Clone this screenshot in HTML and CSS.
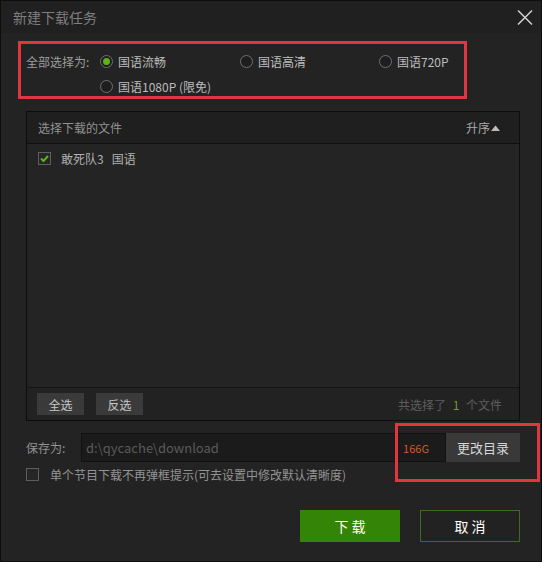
FILE: index.html
```html
<!DOCTYPE html>
<html lang="zh">
<head>
<meta charset="utf-8">
<title>新建下载任务</title>
<link rel="stylesheet" href="styles.css">
</head>
<body>
<div class="window">
  <div class="titlebar">
    <span class="title">新建下载任务</span>
    <svg class="close" width="16" height="15" viewBox="0 0 16 15"><path d="M1 0.5 L15 14.5 M15 0.5 L1 14.5" stroke="#cfcfcf" stroke-width="1.5" fill="none"/></svg>
  </div>

  <div class="quality">
    <span class="q-label">全部选择为:</span>
    <label class="opt"><span class="radio on"></span>国语流畅</label>
    <label class="opt"><span class="radio"></span>国语高清</label>
    <label class="opt"><span class="radio"></span>国语720P</label>
    <span class="q-blank"></span>
    <label class="opt"><span class="radio"></span>国语1080P (限免)</label>
  </div>

  <div class="panel">
    <div class="panel-head">
      <span>选择下载的文件</span>
      <span class="sort">升序<svg width="9" height="6" viewBox="0 0 9 6"><path d="M0 6 L4.5 0.5 L9 6 Z" fill="#bbb"/></svg></span>
    </div>
    <div class="panel-list">
      <div class="file-row">
        <span class="check on"><svg width="11" height="11" viewBox="0 0 11 11"><path d="M2 5.5 L4.5 8 L9 3" stroke="#5fb41c" stroke-width="2" fill="none"/></svg></span>
        <span>敢死队3<span class="gap"></span>国语</span>
      </div>
    </div>
    <div class="panel-foot">
      <div class="foot-btns">
        <button class="btn-small">全选</button>
        <button class="btn-small">反选</button>
      </div>
      <span class="count">共选择了 <em>1</em> 个文件</span>
    </div>
  </div>

  <div class="save-row">
    <span class="save-label">保存为:</span>
    <div class="path">
      <span class="path-text">d:\qycache\download</span>
      <span class="space">166G</span>
    </div>
    <button class="btn-dir">更改目录</button>
  </div>

  <div class="skip-row">
    <span class="check"></span>
    <span>单个节目下载不再弹框提示(可去设置中修改默认清晰度)</span>
  </div>

  <div class="actions">
    <button class="btn-primary">下 载</button>
    <button class="btn-cancel">取 消</button>
  </div>

  <div class="mark"></div>
</div>
</body>
</html>
```

FILE: styles.css
```css
* { box-sizing: border-box; }
html, body { margin: 0; padding: 0; background: #232323; }
body { font-family: "Noto Sans CJK SC", "Noto Sans", sans-serif; font-size: 12px; }

.window {
  position: relative;
  width: 542px;
  height: 562px;
  border: 1px solid #0e0e0e;
  background: #232323;
  overflow: hidden;
}

.titlebar {
  height: 32px;
  display: flex;
  align-items: center;
  justify-content: space-between;
  padding: 0 8px 0 12px;
  background: #202020;
}
.title { font-size: 14px; color: #7e7e7e; }
.close { margin-top: 1px; }

.quality {
  margin: 8px 0 0 17px;
  width: 449px;
  height: 58px;
  border: 3px solid #e1353f;
  padding: 7px 0 0 5px;
  display: grid;
  grid-template-columns: 74px 140px 139px 1fr;
  grid-template-rows: 20px 20px;
  row-gap: 5px;
  align-items: center;
}
.q-label { color: #9e9e9e; }
.opt { display: flex; align-items: center; gap: 5px; color: #bcbcbc; white-space: nowrap; }
.radio {
  width: 13px; height: 13px; border-radius: 50%;
  border: 1px solid #707070;
  background: #1e1e1e;
  display: flex; align-items: center; justify-content: center;
}
.radio.on::after {
  content: ""; width: 7px; height: 7px; border-radius: 50%;
  background: #5cb41a;
}

.panel {
  margin: 12px 0 0 25px;
  width: 494px;
  height: 310px;
  border: 1px solid #0d0d0d;
  display: flex;
  flex-direction: column;
  background: #242424;
}
.panel-head {
  height: 32px;
  border-bottom: 1px solid #0f0f0f;
  background: #1f1f1f;
  display: flex;
  align-items: center;
  justify-content: space-between;
  padding: 0 19px 0 11px;
  color: #929292;
}
.sort { color: #aaa; display: flex; align-items: center; gap: 1px; }
.panel-list { flex: 1; }
.file-row {
  height: 28px;
  display: flex;
  align-items: center;
  gap: 10px;
  padding-left: 11px;
  color: #b0b0b0;
}
.gap { display: inline-block; width: 8px; }
.check {
  width: 13px; height: 13px;
  border: 1px solid #5e5e5e;
  background: #262626;
  display: flex; align-items: center; justify-content: center;
}
.panel-foot {
  height: 33px;
  border-top: 1px solid #151515;
  background: #222;
  display: flex;
  align-items: center;
  justify-content: space-between;
  padding: 0 17px 0 10px;
}
.foot-btns { display: flex; gap: 12px; }
.btn-small {
  width: 47px; height: 22px;
  border: none; background: #3a3a3a;
  color: #c8c8c8;
  font-family: inherit; font-size: 12px;
  padding: 0;
}
.count { color: #5e5e5e; }
.count em { font-style: normal; color: #6c9e28; margin: 0 4px; }

.save-row {
  margin: 12px 0 0 25px;
  width: 494px;
  height: 29px;
  display: flex;
  align-items: stretch;
}
.save-label { width: 55px; color: #929292; display: flex; align-items: center; }
.path {
  flex: 1;
  background: #1b1b1b;
  border: 1px solid #111;
  display: flex;
  align-items: center;
  justify-content: space-between;
  padding: 0 16px 0 4px;
}
.path-text { color: #5a5a5a; font-size: 13px; }
.space { color: #cc5a2c; font-size: 11px; }
.btn-dir {
  width: 74px;
  border: none;
  background: #393939;
  color: #d6d6d6;
  font-family: inherit; font-size: 13px;
  padding: 0;
}

.skip-row {
  margin: 5px 0 0 25px;
  display: flex;
  align-items: center;
  gap: 11px;
  height: 15px;
  color: #939393;
}

.actions {
  margin-top: 28px;
  display: flex;
  justify-content: flex-end;
  gap: 20px;
  padding-right: 21px;
}
.btn-primary, .btn-cancel {
  width: 100px; height: 32px;
  font-family: inherit; font-size: 14px;
  color: #fff;
  padding: 0;
}
.btn-primary { background: #348507; border: none; }
.btn-cancel { background: #222; border: 1px solid #3e6a24; }

.mark {
  position: absolute;
  left: 394px;
  top: 422px;
  width: 145px;
  height: 59px;
  border: 3px solid #e1353f;
}
```
